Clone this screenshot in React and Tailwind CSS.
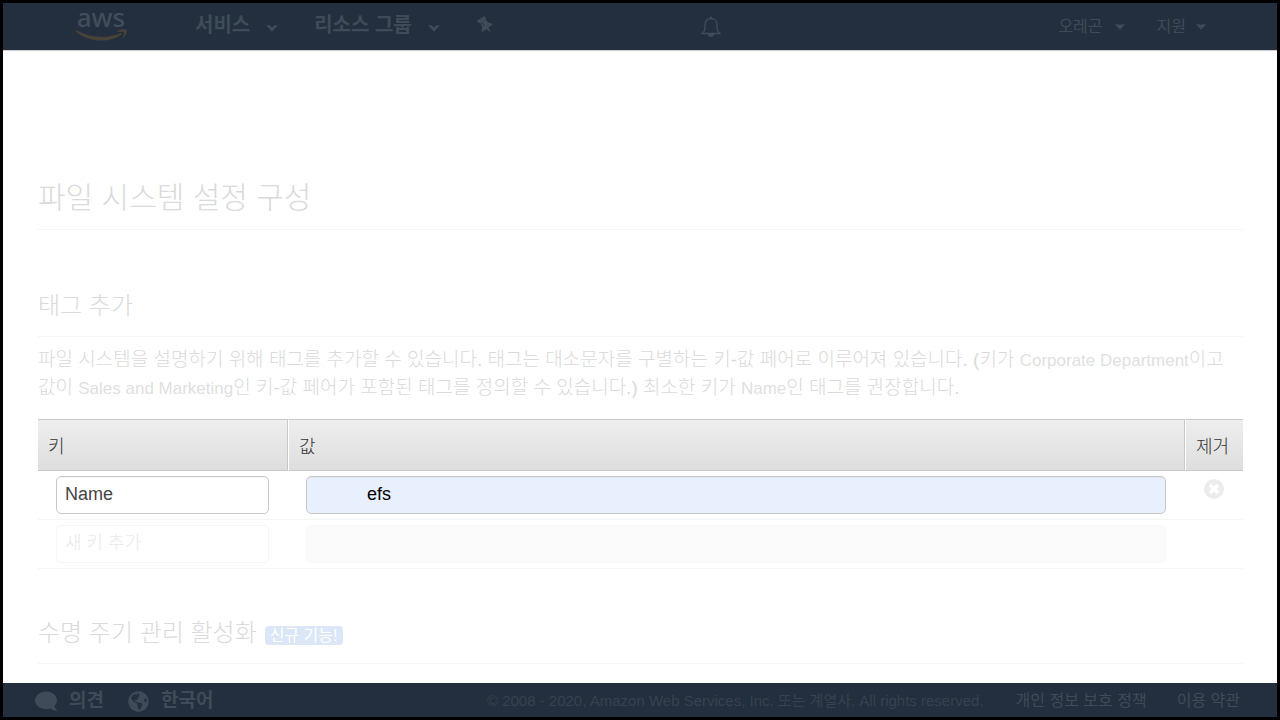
import { FaComment, FaGlobeAmericas } from "react-icons/fa";

// Rows of the tag table. `faded` rows are waiting for input.
const ROWS = [
  { id: "tag-1", key: "Name", value: "efs", faded: false },
  { id: "tag-2", key: "", value: "", faded: true },
];

function AwsLogo() {
  return (
    <a href="#home" className="flex w-[52px] flex-col items-center pb-2 text-[#414d5b]">
      <span className="font-['Noto_Sans'] text-[26px] leading-6 font-medium">aws</span>
      <svg viewBox="0 0 52 12" className="h-3 w-full" fill="#4a4238" aria-hidden="true">
        <path d="M.3 1.6C.6 1 1.200 1 2 1.500 9.500 5.600 18 8 27 8c6 0 12.500-1.300 18.500-3.800 1-.4 1.700.6.8 1.300C41 9.500 33.500 11.500 26.500 11.500 16.500 11.500 7.500 8 .8 2.400c-.3-.2-.6-.5-.5-.8z" />
        <path d="M42.200 2.200C44 .8 47.500-.2 50.600.4c1.100.2 1.200.6 1.100 1.600-.2 2.600-1.500 5.200-3.200 6.700-.5.4-.9.200-.7-.3.600-1.500 1.500-3.900 1.100-4.900-.4-1-3.800-.8-6.200-.6-.6.1-.9-.3-.5-.7z" />
      </svg>
    </a>
  );
}

function Chevron() {
  return (
    <svg viewBox="0 0 12 7" className="mt-2 h-[7px] w-3" fill="currentColor" aria-hidden="true">
      <path d="M0 .2h3.400L6 2.600 8.600.2H12L6 6.800z" />
    </svg>
  );
}

function Caret() {
  return (
    <svg viewBox="0 0 10 6" className="h-[6px] w-[10px]" fill="currentColor" aria-hidden="true">
      <path d="M0 .2h3.500L5 1 6.500.2H10L5 5.800z" />
    </svg>
  );
}

function Pin() {
  return (
    <svg viewBox="0 0 18 20" className="h-5 w-[18px]" fill="currentColor" aria-hidden="true">
      <path d="M1 5.600 8.600 1l1.400 2.200-.5 1.400 3.400 3.600c1.500-.3 3 .2 3.900 1.500l-4.400 2.900 2.900 5.900-4.700-4.500-4.500 2.900c-.9-1.500-.6-3.100.4-4.300L4.400 7.900l-2 .1z" />
      <path d="m5.800 7.200 2.400 3.800" stroke="#232f3e" strokeWidth="0.900" fill="none" />
    </svg>
  );
}

function Bell() {
  return (
    <svg viewBox="0 0 20 22" className="h-[22px] w-5" fill="none" stroke="currentColor" strokeWidth="1.400" aria-hidden="true">
      <path d="M1 17.500C3 16 4 14.500 4 12V8.500C4 5 6.500 2.500 10 2.500s6 2.500 6 6V12c0 2.500 1 4 3 5.500z" />
      <path d="M10 .5v2" strokeWidth="2" />
      <path d="M6.800 18h6.400c0 1.900-1.400 3-3.200 3s-3.200-1.100-3.200-3z" fill="currentColor" stroke="none" />
    </svg>
  );
}

function RemoveIcon() {
  return (
    <svg viewBox="0 0 20 20" className="size-5" aria-hidden="true">
      <circle cx="10" cy="10" r="10" fill="#ececec" />
      <path d="m6 6 8 8m0-8-8 8" stroke="#fff" strokeWidth="3.600" />
    </svg>
  );
}

function Header() {
  return (
    <header className="flex h-12 items-center border-b border-[#cfcfcf] bg-[#232f3e] pr-[71px] pl-[72px] text-[#3f4b59]">
      <AwsLogo />
      <nav className="ml-[68px] flex items-center gap-9 pb-1 text-xl font-bold">
        <button type="button" className="flex items-center gap-4">
          서비스 <Chevron />
        </button>
        <button type="button" className="flex items-center gap-4">
          리소스 그룹 <Chevron />
        </button>
        <button type="button" aria-label="고정">
          <Pin />
        </button>
      </nav>
      <div className="grow-8" />
      <button type="button" aria-label="알림">
        <Bell />
      </button>
      <div className="grow-13" />
      <div className="flex items-center gap-8 text-base">
        <button type="button" className="flex items-center gap-3">
          오레곤 <Caret />
        </button>
        <button type="button" className="flex items-center gap-[10px]">
          지원 <Caret />
        </button>
      </div>
    </header>
  );
}

function TagTable() {
  const th =
    "h-[52px] border-y border-[#c8c8c8] bg-linear-to-b from-[#eeeeee] to-[#dedede] px-[10px] pt-1 text-left font-light text-[#333]";

  return (
    <table className="mt-[17px] w-full border-separate border-spacing-0 text-lg">
      <thead>
        <tr>
          <th id="col-key" className={`${th} w-[250px] border-r`}>키</th>
          <th id="col-value" className={`${th} border-r border-l border-l-white`}>값</th>
          <th id="col-remove" className={`${th} w-[58px] border-l border-l-white whitespace-nowrap`}>제거</th>
        </tr>
      </thead>
      <tbody>
        {ROWS.map((row) => (
          <tr key={row.id}>
            <td className="h-[49px] border-b border-[#f5f5f5] pr-[19px] pl-[18px]">
              <input
                type="text"
                aria-labelledby="col-key"
                defaultValue={row.key}
                placeholder="새 키 추가"
                className={`block h-[38px] w-full rounded-[5px] border px-2 pb-[2px] placeholder:font-light placeholder:text-[#e9e9e9] ${
                  row.faded ? "border-[#f5f5f5]" : "border-[#c8c8c8] text-[#444] shadow-[inset_0_1px_1px_#0000000d]"
                }`}
              />
            </td>
            <td className="border-b border-[#f5f5f5] pr-[19px] pl-[18px]">
              <input
                type="text"
                aria-labelledby="col-value"
                defaultValue={row.value}
                className={`block h-[38px] w-full rounded-[5px] border pr-2 pb-[2px] pl-15 ${
                  row.faded
                    ? "border-[#f7f7f7] bg-[#fbfbfb]"
                    : "border-[#c8c8c8] bg-[#e8f0fe] text-black shadow-[inset_0_1px_1px_#0000000d]"
                }`}
              />
            </td>
            <td className="border-b border-[#f5f5f5] pb-3 text-center">
              {!row.faded && (
                <button type="button" aria-label="제거" className="mx-auto block">
                  <RemoveIcon />
                </button>
              )}
            </td>
          </tr>
        ))}
      </tbody>
    </table>
  );
}

function Footer() {
  return (
    <footer className="flex h-[34px] items-center bg-[#232f3e] pt-[2px] pr-[37px] pl-8 text-base text-[#3f4b59]">
      <div className="flex items-center gap-6 text-[19px] font-bold">
        <button type="button" className="flex items-center gap-3">
          <FaComment className="size-[22px] -scale-x-100" /> 의견
        </button>
        <button type="button" className="flex items-center gap-3">
          <FaGlobeAmericas className="size-[21px]" /> 한국어
        </button>
      </div>
      <p className="ml-auto text-[15px] text-[#364250]">
        © 2008 - 2020, Amazon Web Services, Inc. 또는 계열사. All rights reserved.
      </p>
      <a href="#privacy" className="ml-8">개인 정보 보호 정책</a>
      <a href="#terms" className="ml-[30px]">이용 약관</a>
    </footer>
  );
}

function Latin({ children }) {
  return <span className="text-[17px] leading-none text-[#dfdfdf]">{children}</span>;
}

export default function App() {
  return (
    <div className="flex min-h-screen flex-col border-[3px] border-black bg-white font-['Liberation_Sans','Noto_Sans_CJK_KR',sans-serif]">
      <Header />
      <main className="grow pt-[126px] pr-[34px] pb-[17px] pl-[35px] text-[#dadada]">
        <h1 className="border-b border-[#f5f5f5] pb-[10px] text-[30px] leading-[42px] font-light">
          파일 시스템 설정 구성
        </h1>

        <section className="mt-[58px]">
          <h2 className="border-b border-[#f5f5f5] pb-3 text-2xl leading-9 font-light">태그 추가</h2>
          <p className="mt-[9px] text-[19px] leading-7 font-light">
            파일 시스템을 설명하기 위해 태그를 추가할 수 있습니다. 태그는 대소문자를 구별하는 키-값 페어로
            이루어져 있습니다. (키가 <Latin>Corporate Department</Latin>이고 값이{" "}
            <Latin>Sales and Marketing</Latin>인 키-값 페어가 포함된 태그를 정의할 수 있습니다.) 최소한
            키가 <Latin>Name</Latin>인 태그를 권장합니다.
          </p>
          <TagTable />
        </section>

        <section className="mt-[46px]">
          <h2 className="flex items-center gap-2 border-b border-[#f5f5f5] pb-3 text-2xl leading-9 font-light">
            수명 주기 관리 활성화
            <span className="mt-[5px] rounded-[4px] bg-[#dbe6f6] px-[5px] text-base leading-[19px] font-normal text-white">
              신규 기능!
            </span>
          </h2>
        </section>
      </main>
      <Footer />
    </div>
  );
}
